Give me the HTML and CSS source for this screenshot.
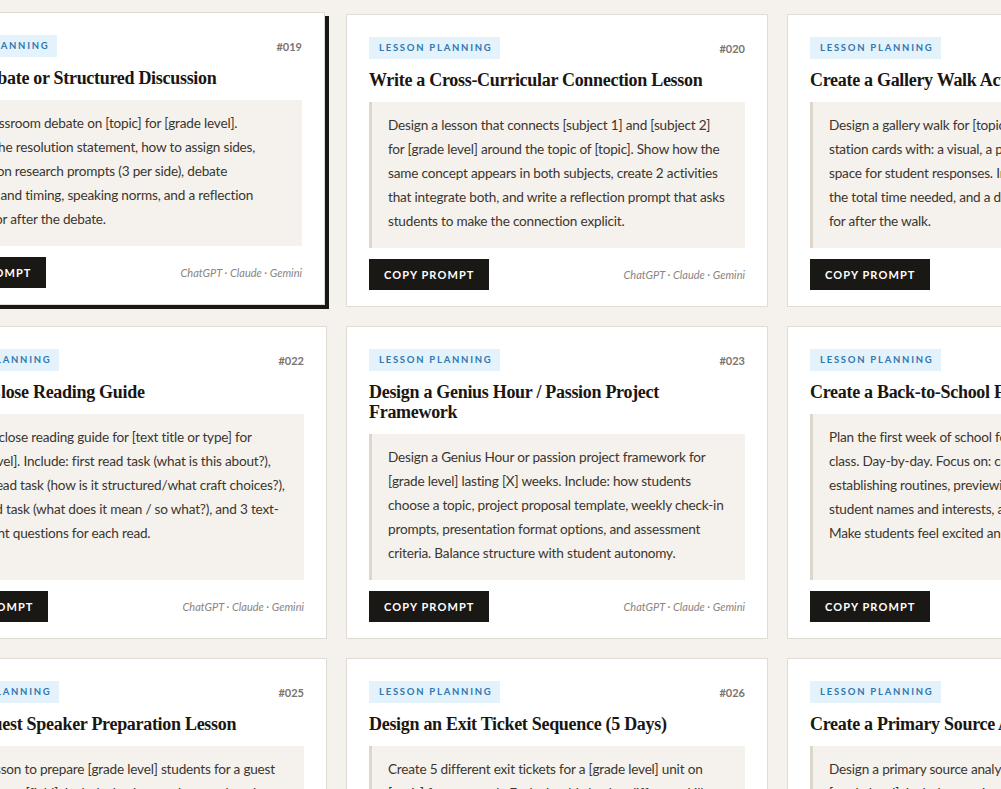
FILE: index.html
```html
<!DOCTYPE html>
<html lang="en">
<head>
<meta charset="utf-8">
<title>Prompt Library — Lesson Planning</title>
<link rel="stylesheet" href="styles.css">
</head>
<body>
<main class="prompt-grid">

  <article class="card is-lifted">
    <div class="card-head"><span class="tag">Lesson Planning</span><span class="num">#019</span></div>
    <h3 class="card-title">Plan a Debate or Structured Discussion</h3>
    <div class="prompt">Plan a classroom debate on [topic] for [grade level]. Include:&nbsp;the resolution statement, how to assign sides, preparation research prompts (3 per side), debate structure&nbsp;and timing, speaking norms, and a reflection prompt&nbsp;for after the debate.</div>
    <div class="card-foot"><button class="copy-btn">Copy Prompt</button><span class="models">ChatGPT · Claude · Gemini</span></div>
  </article>

  <article class="card">
    <div class="card-head"><span class="tag">Lesson Planning</span><span class="num">#020</span></div>
    <h3 class="card-title">Write a Cross-Curricular Connection Lesson</h3>
    <div class="prompt">Design a lesson that connects [subject 1] and [subject 2] for [grade level] around the topic of [topic]. Show how the same concept appears in both subjects, create 2 activities that integrate both, and write a reflection prompt that asks students to make the connection explicit.</div>
    <div class="card-foot"><button class="copy-btn">Copy Prompt</button><span class="models">ChatGPT · Claude · Gemini</span></div>
  </article>

  <article class="card">
    <div class="card-head"><span class="tag">Lesson Planning</span><span class="num">#021</span></div>
    <h3 class="card-title">Create a Gallery Walk Activity</h3>
    <div class="prompt">Design a gallery walk for [topic] for [grade level] with 6 station&nbsp;cards with: a visual, a provocative question, and space&nbsp;for student responses. Include rotation directions, the&nbsp;total time needed, and a debrief discussion question for&nbsp;after the walk.</div>
    <div class="card-foot"><button class="copy-btn">Copy Prompt</button><span class="models">ChatGPT · Claude · Gemini</span></div>
  </article>

  <article class="card">
    <div class="card-head"><span class="tag">Lesson Planning</span><span class="num">#022</span></div>
    <h3 class="card-title">Write a Close Reading Guide</h3>
    <div class="prompt">Create a close reading guide for [text title or type] for [grade level]. Include: first read task (what is this about?), second read task (how is it structured/what craft choices?), third read task (what does it mean / so what?), and 3 text-dependent questions for each read.</div>
    <div class="card-foot"><button class="copy-btn">Copy Prompt</button><span class="models">ChatGPT · Claude · Gemini</span></div>
  </article>

  <article class="card">
    <div class="card-head"><span class="tag">Lesson Planning</span><span class="num">#023</span></div>
    <h3 class="card-title">Design a Genius Hour / Passion Project Framework</h3>
    <div class="prompt">Design a Genius Hour or passion project framework for [grade level] lasting [X] weeks. Include: how students choose a topic, project proposal template, weekly check-in prompts, presentation format options, and assessment criteria. Balance structure with student autonomy.</div>
    <div class="card-foot"><button class="copy-btn">Copy Prompt</button><span class="models">ChatGPT · Claude · Gemini</span></div>
  </article>

  <article class="card">
    <div class="card-head"><span class="tag">Lesson Planning</span><span class="num">#024</span></div>
    <h3 class="card-title">Create a Back-to-School First Week Plan</h3>
    <div class="prompt">Plan the first week of school for a [grade level] [subject] class.&nbsp;Day-by-day. Focus on: community building, establishing&nbsp;routines, previewing the course, learning student&nbsp;names and interests, and building trust. Make&nbsp;students feel excited and welcome.</div>
    <div class="card-foot"><button class="copy-btn">Copy Prompt</button><span class="models">ChatGPT · Claude · Gemini</span></div>
  </article>

  <article class="card">
    <div class="card-head"><span class="tag">Lesson Planning</span><span class="num">#025</span></div>
    <h3 class="card-title">Plan a Guest Speaker Preparation Lesson</h3>
    <div class="prompt">Plan a lesson to prepare [grade level] students for a guest speaker from [field]. Include: background research tasks, how to write strong questions, listening norms, and a thank-you note activity.</div>
    <div class="card-foot"><button class="copy-btn">Copy Prompt</button><span class="models">ChatGPT · Claude · Gemini</span></div>
  </article>

  <article class="card">
    <div class="card-head"><span class="tag">Lesson Planning</span><span class="num">#026</span></div>
    <h3 class="card-title">Design an Exit Ticket Sequence (5 Days)</h3>
    <div class="prompt">Create 5 different exit tickets for a [grade level] unit on [topic] for one week. Each should check a different skill, take under 3 minutes, and build toward the unit's learning goal.</div>
    <div class="card-foot"><button class="copy-btn">Copy Prompt</button><span class="models">ChatGPT · Claude · Gemini</span></div>
  </article>

  <article class="card">
    <div class="card-head"><span class="tag">Lesson Planning</span><span class="num">#027</span></div>
    <h3 class="card-title">Create a Primary Source Analysis Activity</h3>
    <div class="prompt">Design a primary source analysis activity for [topic] in [grade level]. Include sourcing questions, close observation prompts, a context check, and a short written claim students support with evidence.</div>
    <div class="card-foot"><button class="copy-btn">Copy Prompt</button><span class="models">ChatGPT · Claude · Gemini</span></div>
  </article>

</main>
</body>
</html>
```

FILE: styles.css
```css
* {
  box-sizing: border-box;
}

html,
body {
  margin: 0;
  padding: 0;
}

body {
  background: #f5f2ed;
  color: #3b362f;
  font-family: Lato, "Noto Sans", sans-serif;
  overflow: hidden;
}

.prompt-grid {
  display: grid;
  grid-template-columns: repeat(3, 422px);
  column-gap: 19px;
  row-gap: 19px;
  margin: 14px 0 0 -95px;
}

.card {
  display: flex;
  flex-direction: column;
  background: #fff;
  border: 1px solid #e0dbd3;
  padding: 22px 22px 16px;
}

.card.is-lifted {
  transform: translate(-2px, -2px);
  box-shadow: 4px 4px 0 #1a1814;
}

.card-head {
  display: flex;
  justify-content: space-between;
  align-items: center;
  margin-bottom: 11px;
}

.tag {
  display: inline-block;
  height: 22px;
  line-height: 22px;
  padding: 0 8px 0 10px;
  background: #e4f2fb;
  color: #2f78b2;
  font-size: 9.5px;
  font-weight: 700;
  letter-spacing: 1.75px;
  text-transform: uppercase;
}

.num {
  color: #7a756e;
  font-size: 11px;
  font-weight: 700;
}

.card-title {
  margin: 0 0 12px;
  color: #1a1612;
  font-family: "Liberation Serif", "Times New Roman", serif;
  font-size: 18px;
  font-weight: 700;
  letter-spacing: -0.3px;
  line-height: 20px;
}

.prompt {
  flex: 1;
  background: #f5f2ed;
  border-left: 3px solid #ddd6cc;
  padding: 11px 16px 15px;
  font-size: 13.6px;
  letter-spacing: -0.2px;
  line-height: 24px;
}

.card-foot {
  display: flex;
  justify-content: space-between;
  align-items: center;
  margin-top: 11px;
}

.copy-btn {
  height: 31px;
  padding: 0 14px 0 15px;
  border: 0;
  background: #1a1814;
  color: #fff;
  font-family: Lato, "Noto Sans", sans-serif;
  font-size: 11px;
  font-weight: 700;
  letter-spacing: 1.1px;
  text-transform: uppercase;
}

.models {
  color: #8a857f;
  font-size: 11px;
  font-style: italic;
}
```
